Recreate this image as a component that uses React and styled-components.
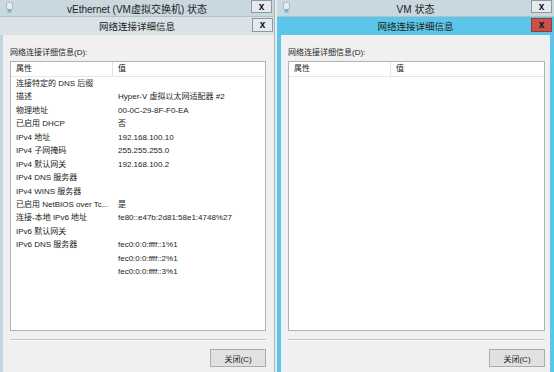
import React from 'react';
import styled, { createGlobalStyle } from 'styled-components';

const GlobalStyle = createGlobalStyle`
  html, body {
    margin: 0;
    padding: 0;
    background: #e6ecef;
  }
  body {
    font-family: "Liberation Sans", "Noto Sans CJK SC", sans-serif;
    color: #1a1a1a;
  }
`;

const Screen = styled.div`
  display: flex;
  gap: 2px;
  width: 554px;
  height: 372px;
  overflow: hidden;
`;

const Window = styled.div`
  display: flex;
  flex-direction: column;
  width: ${(p) => p.width}px;
  height: 372px;
  flex-shrink: 0;
  border-right: ${(p) => (p.active ? 'none' : '1px solid #a7b4bb')};
  box-sizing: border-box;
`;

const OuterBar = styled.div`
  position: relative;
  display: flex;
  align-items: center;
  justify-content: center;
  height: 17px;
  background: #c9d7df;
  font-size: 10px;
  color: #222;
  border-bottom: 1px solid #b3c2ca;
  box-sizing: border-box;
`;

const BarIcon = styled.svg`
  position: absolute;
  left: 6px;
  top: 2px;
`;

const CloseButton = styled.div`
  position: absolute;
  right: ${(p) => p.right}px;
  top: ${(p) => p.top}px;
  display: flex;
  align-items: center;
  justify-content: center;
  width: 21px;
  height: ${(p) => p.h}px;
  box-sizing: border-box;
  background: ${(p) => (p.red ? '#c9514b' : '#e4eaed')};
  border: 1px solid ${(p) => (p.red ? '#9b3a35' : '#8d999f')};
  font-family: "Liberation Sans", sans-serif;
  font-weight: bold;
  font-size: 10px;
  line-height: 1;
  color: #111;
`;

const Dialog = styled.div`
  display: flex;
  flex-direction: column;
  flex: 1;
  min-height: 0;
`;

const TitleBar = styled.div`
  position: relative;
  display: flex;
  align-items: center;
  justify-content: center;
  height: 18px;
  background: ${(p) => (p.active ? '#5bc6e9' : '#d9e2e7')};
  font-size: 9.5px;
  color: #222;
`;

const Body = styled.div`
  display: flex;
  flex-direction: column;
  flex: 1;
  background: #f0f0f0;
  border-left: ${(p) => p.frame}px solid ${(p) => (p.active ? '#5bc6e9' : '#c3d5de')};
  border-right: ${(p) => (p.active ? '4px solid #5bc6e9' : 'none')};
  padding: 12px ${(p) => p.padRight}px 0 7px;
  font-size: 8px;
`;

const Label = styled.div`
  height: 12px;
  line-height: 12px;
  margin-bottom: 2px;
  color: #1e1e1e;
`;

const ListBox = styled.div`
  height: 270px;
  background: #fff;
  border: 1px solid #aeb3b9;
  box-sizing: border-box;
  overflow: hidden;
`;

const HeaderRow = styled.div`
  display: grid;
  grid-template-columns: 102px 1fr;
  height: 14px;
  line-height: 14px;
  border-bottom: 1px solid #e5e5e5;
`;

const HeaderCell = styled.div`
  padding-left: 5px;
  border-right: ${(p) => (p.first ? '1px solid #e3e3e3' : 'none')};
  color: #222;
`;

const Row = styled.div`
  display: grid;
  grid-template-columns: 107px 1fr;
  height: 13.45px;
  line-height: 13.45px;
  white-space: nowrap;
`;

const Cell = styled.div`
  padding-left: ${(p) => (p.first ? 5 : 0)}px;
  overflow: hidden;
  color: #1a1a1a;
`;

const Separator = styled.div`
  margin-top: 8px;
  height: 1px;
  background: #c8c8c8;
  border-bottom: 1px solid #fbfbfb;
`;

const Footer = styled.div`
  display: flex;
  justify-content: flex-end;
  margin-top: 8px;
`;

const Button = styled.div`
  display: flex;
  align-items: center;
  justify-content: center;
  width: 56px;
  height: 18px;
  box-sizing: border-box;
  background: #e1e1e1;
  border: 1px solid #adadad;
  font-size: 8px;
  color: #1a1a1a;
`;

const rows = [
  ['连接特定的 DNS 后缀', ''],
  ['描述', 'Hyper-V 虚拟以太网适配器 #2'],
  ['物理地址', '00-0C-29-8F-F0-EA'],
  ['已启用 DHCP', '否'],
  ['IPv4 地址', '192.168.100.10'],
  ['IPv4 子网掩码', '255.255.255.0'],
  ['IPv4 默认网关', '192.168.100.2'],
  ['IPv4 DNS 服务器', ''],
  ['IPv4 WINS 服务器', ''],
  ['已启用 NetBIOS over Tc...', '是'],
  ['连接-本地 IPv6 地址', 'fe80::e47b:2d81:58e1:4748%27'],
  ['IPv6 默认网关', ''],
  ['IPv6 DNS 服务器', 'fec0:0:0:ffff::1%1'],
  ['', 'fec0:0:0:ffff::2%1'],
  ['', 'fec0:0:0:ffff::3%1'],
];

const NetIcon = () => (
  <BarIcon width="7" height="11" viewBox="0 0 7 11">
    <rect x="0.5" y="0.5" width="6" height="7" rx="2" fill="#e8eef1" stroke="#a9b6bd" />
    <rect x="1.5" y="7" width="4" height="3.5" rx="1" fill="#6fb2dc" />
  </BarIcon>
);

const DetailWindow = ({ title, width, active, frame, padRight, items }) => (
  <Window width={width} active={active}>
    <OuterBar>
      <NetIcon />
      {title}
      <CloseButton right={2} top={0} h={13}>x</CloseButton>
    </OuterBar>
    <Dialog>
      <TitleBar active={active}>
        网络连接详细信息
        <CloseButton right={active ? 2 : 1} top={1} h={14} red={active}>x</CloseButton>
      </TitleBar>
      <Body active={active} frame={frame} padRight={padRight}>
        <Label>网络连接详细信息(D):</Label>
        <ListBox>
          <HeaderRow>
            <HeaderCell first>属性</HeaderCell>
            <HeaderCell>值</HeaderCell>
          </HeaderRow>
          {items.map(([k, v], i) => (
            <Row key={i}>
              <Cell first>{k}</Cell>
              <Cell>{v}</Cell>
            </Row>
          ))}
        </ListBox>
        <Separator />
        <Footer>
          <Button>关闭(C)</Button>
        </Footer>
      </Body>
    </Dialog>
  </Window>
);

export default function App() {
  return (
    <>
      <GlobalStyle />
      <Screen>
        <DetailWindow
          title="vEthernet (VM虚拟交换机) 状态"
          width={275}
          frame={3}
          padRight={8}
          items={rows}
        />
        <DetailWindow
          title="VM 状态"
          width={277}
          active
          frame={4}
          padRight={5}
          items={[]}
        />
      </Screen>
    </>
  );
}
